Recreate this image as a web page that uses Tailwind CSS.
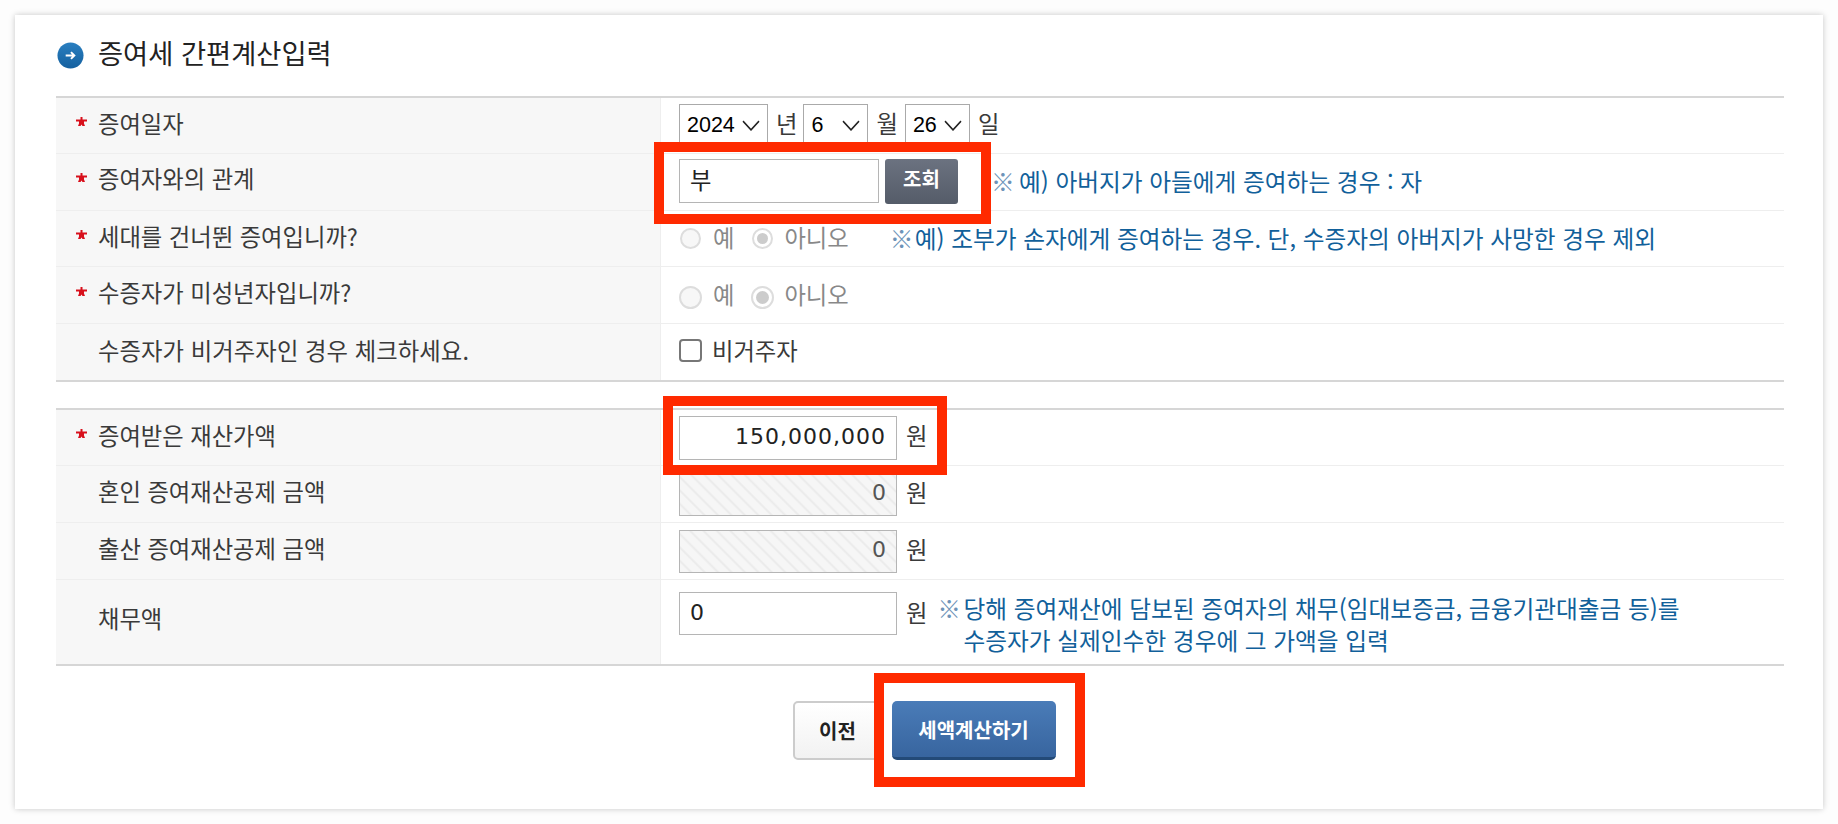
<!DOCTYPE html>
<html lang="ko">
<head>
  <meta charset="UTF-8">
  <title>증여세 간편계산입력</title>
  <script src="https://cdn.jsdelivr.net/npm/@tailwindcss/browser@4"></script>
</head>
<body class="relative bg-[#fdfdfd] h-[824px] overflow-hidden font-['Noto_Sans_CJK_KR','Noto_Sans',sans-serif] text-[23.3px] text-[#3a3a3a]">
  <div class="ml-[15px] mt-[15px] w-[1808px] h-[794px] bg-white shadow-[0_0_6px_rgba(0,0,0,0.22)] px-[41px]">
    <!-- title -->
    <div class="flex items-center h-[81px] text-[27.3px] text-[#222]">
      <svg class="ml-[1px] w-[27px] h-[27px]" viewBox="0 0 28 28">
        <defs><linearGradient id="ico" x1="0" y1="0" x2="0" y2="1"><stop offset="0" stop-color="#2a7fc0"/><stop offset="1" stop-color="#14609f"/></linearGradient></defs>
        <circle cx="14" cy="14" r="13.5" fill="url(#ico)"/>
        <path d="M9 14h9M14.5 10.5l3.5 3.5-3.5 3.5" fill="none" stroke="#fff" stroke-width="2"/>
      </svg>
      <span class="ml-[14px] mb-[6px]">증여세 간편계산입력</span>
    </div>

    <!-- first table -->
    <div class="border-t-2 border-b-2 border-[#d6d6d6] w-[1728px]">
      <div class="flex h-[56px] border-b border-[#eee]">
        <div class="w-[605px] bg-[#f7f7f7] border-r border-[#eee] flex items-center pb-[5px]">
          <svg class="w-[11px] h-[9px] ml-[20px] mr-[11px] mb-[3px]" viewBox="0 0 11 9"><path d="M4.5 0h2v2.5H11v2H8v2l1 2.5H6.5L5.5 7.5 4.5 9H2l1-2.5v-2H0v-2h4.5z" fill="#d8101c"/></svg>
          <span>증여일자</span>
        </div>
        <div class="flex items-center pl-[18px]">
          <div class="flex items-center justify-between w-[89px] h-[44px] border border-[#aaa] pl-[7px] pr-[7px] text-black text-[21.5px] font-['Liberation_Sans',sans-serif]">2024<svg class="w-[18px] h-[11px]" viewBox="0 0 18 10" preserveAspectRatio="none"><path d="M1 1l8 8 8-8" fill="none" stroke="#222" stroke-width="1.5"/></svg></div>
          <span class="ml-[8px] mb-[5px]">년</span>
          <div class="ml-[6px] flex items-center justify-between w-[65px] h-[44px] border border-[#aaa] pl-[7px] pr-[7px] text-black text-[21.5px] font-['Liberation_Sans',sans-serif]">6<svg class="w-[18px] h-[11px]" viewBox="0 0 18 10" preserveAspectRatio="none"><path d="M1 1l8 8 8-8" fill="none" stroke="#222" stroke-width="1.5"/></svg></div>
          <span class="ml-[8px] mb-[5px]">월</span>
          <div class="ml-[7px] flex items-center justify-between w-[65px] h-[44px] border border-[#aaa] pl-[7px] pr-[7px] text-black text-[21.5px] font-['Liberation_Sans',sans-serif]">26<svg class="w-[18px] h-[11px]" viewBox="0 0 18 10" preserveAspectRatio="none"><path d="M1 1l8 8 8-8" fill="none" stroke="#222" stroke-width="1.5"/></svg></div>
          <span class="ml-[8px] mb-[5px]">일</span>
        </div>
      </div>

      <div class="flex h-[57px] border-b border-[#eee]">
        <div class="w-[605px] bg-[#f7f7f7] border-r border-[#eee] flex items-center pb-[8px]">
          <svg class="w-[11px] h-[9px] ml-[20px] mr-[11px] mb-[1px]" viewBox="0 0 11 9"><path d="M4.5 0h2v2.5H11v2H8v2l1 2.5H6.5L5.5 7.5 4.5 9H2l1-2.5v-2H0v-2h4.5z" fill="#d8101c"/></svg>
          <span>증여자와의 관계</span>
        </div>
        <div class="flex items-center pl-[18px]">
          <div class="flex items-center w-[200px] h-[44px] mb-[2px] border border-[#b5b5b5] pl-[10px] pb-[4px] text-[#222]">부</div>
          <button class="ml-[6px] mb-[1px] pb-[6px] w-[73px] h-[45px] rounded-[3px] bg-gradient-to-b from-[#6b7280] to-[#555c69] text-white font-bold text-[20px]">조회</button>
          <span class="ml-[33px] flex text-[23.7px] text-[#11609a]"><span class="w-[28px] text-[#6d93b8]">※</span>예) 아버지가 아들에게 증여하는 경우 : 자</span>
        </div>
      </div>

      <div class="flex h-[56px] border-b border-[#eee]">
        <div class="w-[605px] bg-[#f7f7f7] border-r border-[#eee] flex items-center pb-[5px]">
          <svg class="w-[11px] h-[9px] ml-[20px] mr-[11px] mb-[3px]" viewBox="0 0 11 9"><path d="M4.5 0h2v2.5H11v2H8v2l1 2.5H6.5L5.5 7.5 4.5 9H2l1-2.5v-2H0v-2h4.5z" fill="#d8101c"/></svg>
          <span>세대를 건너뛴 증여입니까?</span>
        </div>
        <div class="flex items-center pl-[19px] text-[#888]">
          <span class="w-[21px] h-[21px] rounded-full border-2 border-[#ddd] bg-[#f7f7f7]"></span>
          <span class="ml-[12px] mb-[3px]">예</span>
          <span class="ml-[18px] w-[21px] h-[21px] rounded-full border-2 border-[#ddd] flex items-center justify-center"><span class="w-[11px] h-[11px] rounded-full bg-[#ccc]"></span></span>
          <span class="ml-[11px] mb-[3px]">아니오</span>
          <span class="ml-[41px] flex text-[23.7px] text-[#11609a]"><span class="w-[25px] text-[#6d93b8]">※</span>예) 조부가 손자에게 증여하는 경우. 단, 수증자의 아버지가 사망한 경우 제외</span>
        </div>
      </div>

      <div class="flex h-[57px] border-b border-[#eee]">
        <div class="w-[605px] bg-[#f7f7f7] border-r border-[#eee] flex items-center pb-[5px]">
          <svg class="w-[11px] h-[9px] ml-[20px] mr-[11px] mb-[3px]" viewBox="0 0 11 9"><path d="M4.5 0h2v2.5H11v2H8v2l1 2.5H6.5L5.5 7.5 4.5 9H2l1-2.5v-2H0v-2h4.5z" fill="#d8101c"/></svg>
          <span>수증자가 미성년자입니까?</span>
        </div>
        <div class="flex items-center pl-[18px] text-[#888]">
          <span class="mt-[4px] w-[23px] h-[23px] rounded-full border-2 border-[#ddd] bg-[#f7f7f7]"></span>
          <span class="ml-[11px] mb-[2px]">예</span>
          <span class="mt-[4px] ml-[17px] w-[23px] h-[23px] rounded-full border-2 border-[#ddd] flex items-center justify-center"><span class="w-[13px] h-[13px] rounded-full bg-[#ccc]"></span></span>
          <span class="ml-[10px] mb-[2px]">아니오</span>
        </div>
      </div>

      <div class="flex h-[56px]">
        <div class="w-[605px] bg-[#f7f7f7] border-r border-[#eee] flex items-center pl-[42px] pb-[4px]"><span class="tracking-[0.1px]">수증자가 비거주자인 경우 체크하세요.</span></div>
        <div class="flex items-center pl-[18px] pb-[3px]">
          <span class="w-[23px] h-[23px] rounded-[4px] border-2 border-[#777] bg-white"></span>
          <span class="ml-[10px]">비거주자</span>
        </div>
      </div>
    </div>

    <!-- second table -->
    <div class="mt-[26px] border-t-2 border-b-2 border-[#d6d6d6] w-[1728px]">
      <div class="flex h-[56px] border-b border-[#eee]">
        <div class="w-[605px] bg-[#f7f7f7] border-r border-[#eee] flex items-center pb-[5px]">
          <svg class="w-[11px] h-[9px] ml-[20px] mr-[11px] mb-[3px]" viewBox="0 0 11 9"><path d="M4.5 0h2v2.5H11v2H8v2l1 2.5H6.5L5.5 7.5 4.5 9H2l1-2.5v-2H0v-2h4.5z" fill="#d8101c"/></svg>
          <span>증여받은 재산가액</span>
        </div>
        <div class="flex items-center pl-[18px]">
          <div class="flex items-center justify-end w-[218px] h-[44px] border border-[#b5b5b5] pr-[10px] pb-[3px] text-[#222] text-[22px] tracking-[1px] font-['DejaVu_Sans',sans-serif]">150,000,000</div>
          <span class="ml-[9px] mb-[4px]">원</span>
        </div>
      </div>

      <div class="flex h-[57px] border-b border-[#eee]">
        <div class="w-[605px] bg-[#f7f7f7] border-r border-[#eee] flex items-center pl-[42px] pb-[5px]">혼인 증여재산공제 금액</div>
        <div class="flex items-center pl-[18px]">
          <div class="flex items-center justify-end w-[218px] h-[43px] border border-[#b5b5b5] pr-[10px] pb-[3px] text-[#555] text-[22px] font-['DejaVu_Sans',sans-serif] bg-[repeating-linear-gradient(45deg,#f6f6f6_0,#f6f6f6_6px,#ebebeb_7.5px,#ebebeb_8px,#f6f6f6_9.5px)]">0</div>
          <span class="ml-[9px] mb-[4px]">원</span>
        </div>
      </div>

      <div class="flex h-[57px] border-b border-[#eee]">
        <div class="w-[605px] bg-[#f7f7f7] border-r border-[#eee] flex items-center pl-[42px] pb-[5px]">출산 증여재산공제 금액</div>
        <div class="flex items-center pl-[18px]">
          <div class="flex items-center justify-end w-[218px] h-[43px] border border-[#b5b5b5] pr-[10px] pb-[3px] text-[#555] text-[22px] font-['DejaVu_Sans',sans-serif] bg-[repeating-linear-gradient(45deg,#f6f6f6_0,#f6f6f6_6px,#ebebeb_7.5px,#ebebeb_8px,#f6f6f6_9.5px)]">0</div>
          <span class="ml-[9px] mb-[4px]">원</span>
        </div>
      </div>

      <div class="flex h-[84px]">
        <div class="w-[605px] bg-[#f7f7f7] border-r border-[#eee] flex items-center pl-[42px] pb-[8px]">채무액</div>
        <div class="flex items-start pl-[18px] pt-[12px]">
          <div class="flex items-center w-[218px] h-[43px] border border-[#b5b5b5] pl-[10px] pb-[3px] text-[#222] text-[22px] font-['DejaVu_Sans',sans-serif]">0</div>
          <span class="ml-[9px] mt-[3px]">원</span>
          <span class="ml-[10px] w-[26px] leading-[32px] text-[#6d93b8]">※</span>
          <div class="text-[#11609a] text-[23.7px] leading-[32px]">당해 증여재산에 담보된 증여자의 채무(임대보증금, 금융기관대출금 등)를<br>수증자가 실제인수한 경우에 그 가액을 입력</div>
        </div>
      </div>
    </div>

    <!-- buttons -->
    <div class="flex justify-center gap-[9px] mt-[35px] w-[1728px] pl-[8px]">
      <button class="w-[90px] h-[59px] rounded-[5px] border-2 border-[#ccc] bg-gradient-to-b from-white to-[#f2f2f2] font-bold text-[#222] text-[20px]">이전</button>
      <button class="w-[164px] h-[59px] rounded-[5px] bg-gradient-to-b from-[#4a7cb8] to-[#38659f] border-b-[3px] border-[#234a78] font-bold text-white text-[20px] pt-[2px]">세액계산하기</button>
    </div>
  </div>

  <!-- red highlight boxes drawn over the form -->
  <div class="absolute left-[654px] top-[142px] w-[337px] h-[82px] border-[10px] border-[#ff2a00]"></div>
  <div class="absolute left-[663px] top-[396px] w-[284px] h-[79px] border-[10px] border-[#ff2a00]"></div>
  <div class="absolute left-[874px] top-[673px] w-[211px] h-[114px] border-[10px] border-[#ff2a00]"></div>
</body>
</html>
